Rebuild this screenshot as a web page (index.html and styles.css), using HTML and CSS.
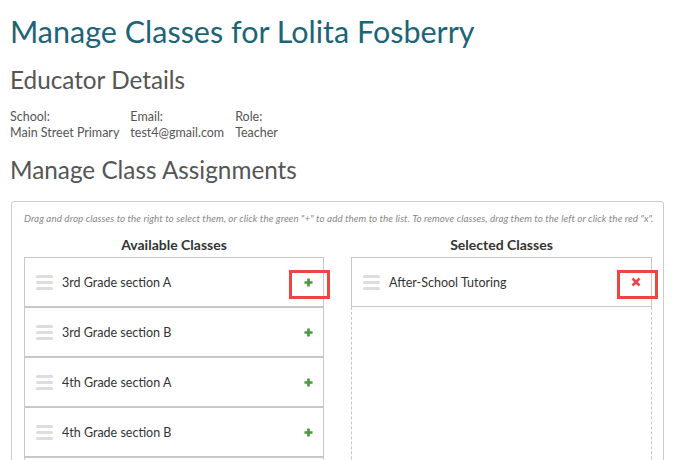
FILE: index.html
```html
<!DOCTYPE html>
<html>
<head>
  <meta charset="utf-8">
  <link rel="stylesheet" href="styles.css">
</head>
<body>
  <h1 class="page-title">Manage Classes for Lolita Fosberry</h1>

  <h2 class="section-title">Educator Details</h2>
  <div class="details">
    <div class="detail">
      <div>School:</div>
      <div>Main Street Primary</div>
    </div>
    <div class="detail">
      <div>Email:</div>
      <div>test4@gmail.com</div>
    </div>
    <div class="detail">
      <div>Role:</div>
      <div>Teacher</div>
    </div>
  </div>

  <h2 class="section-title assignments-title">Manage Class Assignments</h2>
  <div class="panel">
    <p class="hint">Drag and drop classes to the right to select them, or click the green "+" to add them to the list. To remove classes, drag them to the left or click the red "x".</p>

    <div class="columns">
      <div class="column">
        <h3>Available Classes</h3>
        <ul class="class-list">
          <li class="class-item">
            <span class="handle"></span>
            <span class="name">3rd Grade section A</span>
            <svg class="action add" viewBox="0 0 10 10"><path d="M5 0.5v9M0.5 5h9"/></svg>
            <span class="highlight"></span>
          </li>
          <li class="class-item">
            <span class="handle"></span>
            <span class="name">3rd Grade section B</span>
            <svg class="action add" viewBox="0 0 10 10"><path d="M5 0.5v9M0.5 5h9"/></svg>
          </li>
          <li class="class-item">
            <span class="handle"></span>
            <span class="name">4th Grade section A</span>
            <svg class="action add" viewBox="0 0 10 10"><path d="M5 0.5v9M0.5 5h9"/></svg>
          </li>
          <li class="class-item">
            <span class="handle"></span>
            <span class="name">4th Grade section B</span>
            <svg class="action add" viewBox="0 0 10 10"><path d="M5 0.5v9M0.5 5h9"/></svg>
          </li>
          <li class="class-item"></li>
        </ul>
      </div>

      <div class="column">
        <h3>Selected Classes</h3>
        <ul class="class-list">
          <li class="class-item">
            <span class="handle"></span>
            <span class="name">After-School Tutoring</span>
            <svg class="action remove" viewBox="0 0 10 10"><path d="M1.5 1.5l7 7M8.5 1.5l-7 7"/></svg>
            <span class="highlight"></span>
          </li>
        </ul>
      </div>
    </div>
  </div>
</body>
</html>
```

FILE: styles.css
```css
body {
  margin: 0;
  padding: 0 10px;
  font-family: Lato, "Open Sans", sans-serif;
  color: #555;
  background: #fff;
}

.page-title {
  margin: 13px 0 0;
  font-size: 30.5px;
  line-height: 36px;
  font-weight: 400;
  color: #1d6476;
}

.section-title {
  margin: 16px 0 0;
  font-size: 24.3px;
  line-height: 29px;
  font-weight: 400;
  color: #555;
}

.assignments-title {
  margin-top: 14px;
}

.details {
  display: flex;
  margin-top: 15px;
  font-size: 12.5px;
  line-height: 16px;
}

.detail {
  margin-right: 11px;
}

.panel {
  margin: 17px 0 0 1px;
  height: 400px;
  border: 1px solid #ccc;
  border-radius: 3px;
  padding: 10px 12px 0;
}

.hint {
  margin: 0;
  font-size: 9.8px;
  line-height: 12px;
  font-style: italic;
  color: #888;
  letter-spacing: 0.08px;
  white-space: nowrap;
}

.columns {
  display: grid;
  grid-template-columns: 300px 301px;
  column-gap: 27px;
  margin-top: 12px;
}

.column h3 {
  margin: 0 0 4px;
  font-size: 14px;
  line-height: 17px;
  font-weight: 700;
  color: #333;
  text-align: center;
}

.class-list {
  list-style: none;
  margin: 0;
  padding: 0;
  border: 1px dashed #c4c4c4;
  min-height: 300px;
}

.class-item {
  position: relative;
  display: flex;
  align-items: center;
  height: 48px;
  border: 1px solid #c8c8c8;
  margin: -1px -1px 0;
  font-size: 12.5px;
  color: #333;
}

.class-item + .class-item {
  margin-top: 0;
}

.handle {
  width: 17px;
  height: 3px;
  margin: 0 9px 0 11px;
  background: #ddd;
  border-radius: 2px;
  box-shadow: 0 -6px 0 #ddd, 0 6px 0 #ddd;
}

.name {
  flex: 1;
}

.action {
  width: 9px;
  height: 9px;
  margin-right: 10px;
  fill: none;
  stroke-width: 3;
}

.add {
  stroke: #4b9b40;
}

.remove {
  width: 10px;
  height: 10px;
  stroke: #e5484b;
  stroke-width: 2.6;
}

.highlight {
  position: absolute;
  top: 12px;
  right: -7px;
  width: 35px;
  height: 23px;
  border: 3px solid #f04444;
}
```
